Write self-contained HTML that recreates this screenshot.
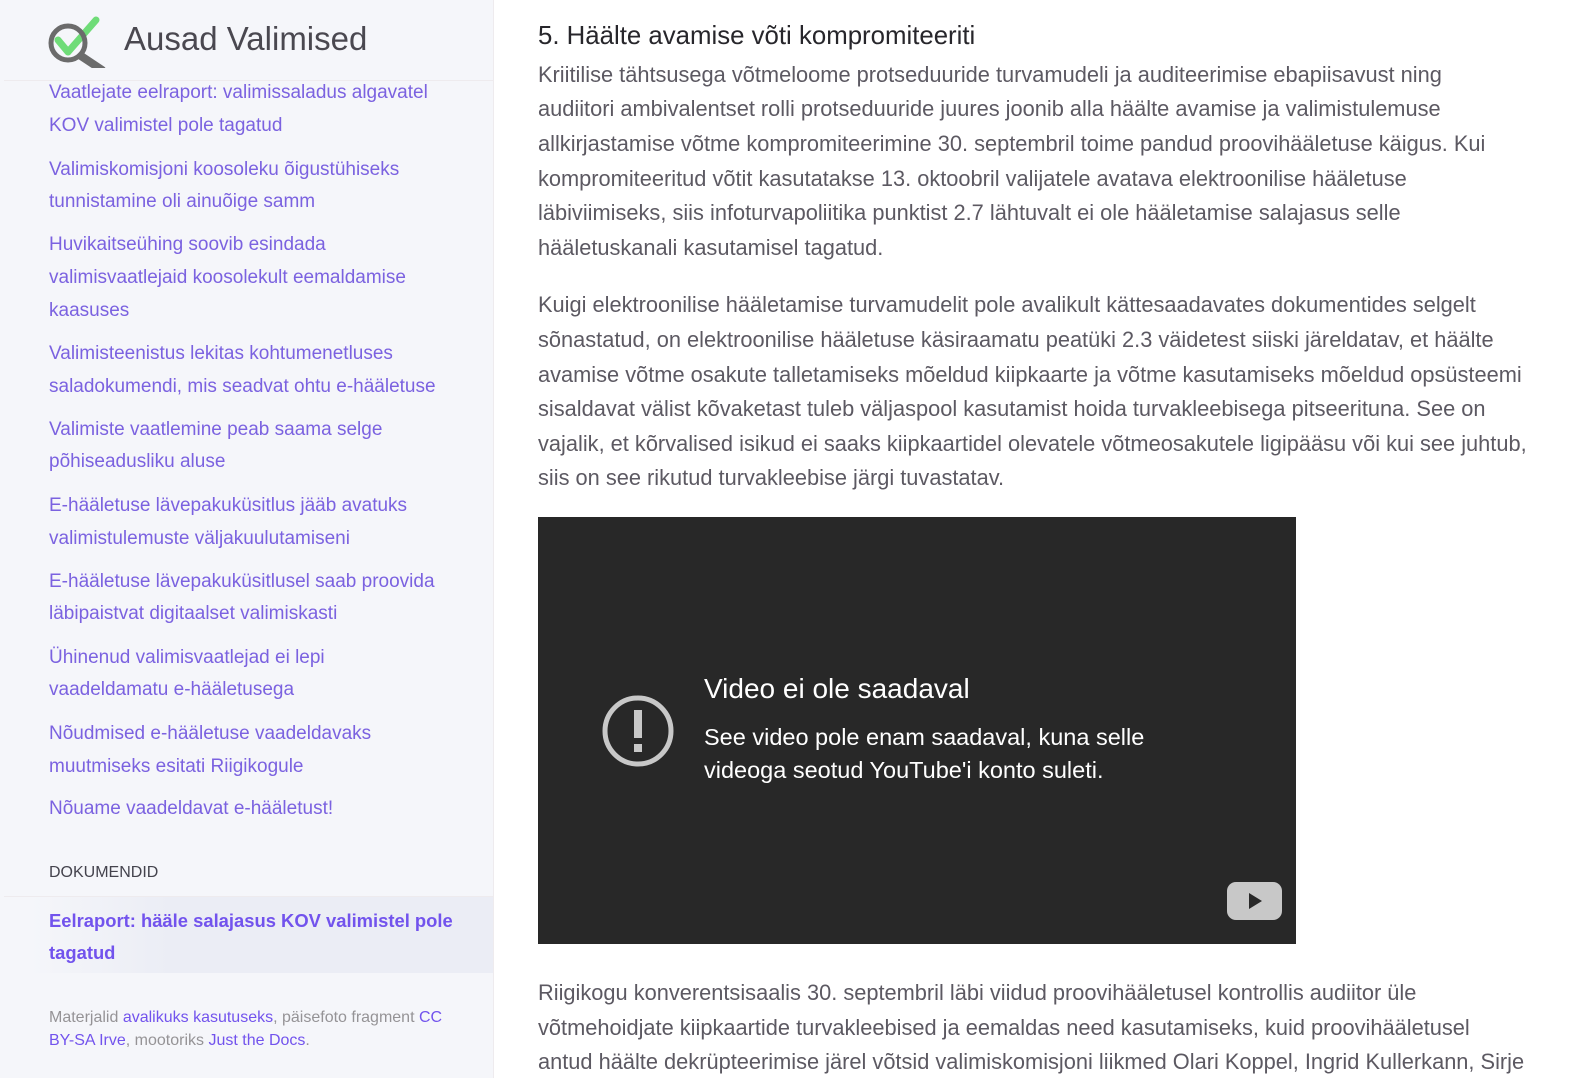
<!DOCTYPE html>
<html><head><meta charset="utf-8"><style>
body{margin:0;width:1577px;height:1078px;overflow:hidden;background:#fff;font-family:"Liberation Sans","DejaVu Sans",sans-serif;position:relative}
#side{position:absolute;left:0;top:0;width:493px;height:1078px;background:#f5f6fa;border-right:1px solid #eeebee}
.l{position:absolute;white-space:nowrap}
.s{left:49px;font-size:19px;color:#7b62e0;line-height:33px}
.m{left:538px;font-size:21.8px;color:#5c5962;line-height:35px}
</style></head><body>
<div id="side">
<svg style="position:absolute;left:46px;top:14px" width="64" height="54" viewBox="0 0 64 54">
<path d="M12 26 L22 38 L50 6" stroke="#6fdc78" stroke-width="7" fill="none" stroke-linecap="round" stroke-linejoin="round"/>
<circle cx="22" cy="29" r="17" stroke="#6b6b6b" stroke-width="5" fill="none"/>
<path d="M35 42 L56 56" stroke="#6b6b6b" stroke-width="8" stroke-linecap="round"/>
</svg>
<div class="l" style="left:124px;top:18px;font-size:33px;color:#4a4850;line-height:42px">Ausad Valimised</div>
<div style="position:absolute;left:4px;top:80px;width:489px;height:1px;background:#eeebee"></div>
<div class="l s" style="top:76px">Vaatlejate eelraport: valimissaladus algavatel</div>
<div class="l s" style="top:109px">KOV valimistel pole tagatud</div>
<div class="l s" style="top:153px">Valimiskomisjoni koosoleku õigustühiseks</div>
<div class="l s" style="top:185px">tunnistamine oli ainuõige samm</div>
<div class="l s" style="top:228px">Huvikaitseühing soovib esindada</div>
<div class="l s" style="top:261px">valimisvaatlejaid koosolekult eemaldamise</div>
<div class="l s" style="top:294px">kaasuses</div>
<div class="l s" style="top:337px">Valimisteenistus lekitas kohtumenetluses</div>
<div class="l s" style="top:370px">saladokumendi, mis seadvat ohtu e-hääletuse</div>
<div class="l s" style="top:413px">Valimiste vaatlemine peab saama selge</div>
<div class="l s" style="top:445px">põhiseadusliku aluse</div>
<div class="l s" style="top:489px">E-hääletuse lävepakuküsitlus jääb avatuks</div>
<div class="l s" style="top:522px">valimistulemuste väljakuulutamiseni</div>
<div class="l s" style="top:565px">E-hääletuse lävepakuküsitlusel saab proovida</div>
<div class="l s" style="top:597px">läbipaistvat digitaalset valimiskasti</div>
<div class="l s" style="top:641px">Ühinenud valimisvaatlejad ei lepi</div>
<div class="l s" style="top:673px">vaadeldamatu e-hääletusega</div>
<div class="l s" style="top:717px">Nõudmised e-hääletuse vaadeldavaks</div>
<div class="l s" style="top:750px">muutmiseks esitati Riigikogule</div>
<div class="l s" style="top:792px">Nõuame vaadeldavat e-hääletust!</div>
<div class="l" style="left:49px;top:864px;font-size:16px;color:#44434d">DOKUMENDID</div>
<div style="position:absolute;left:4px;top:896px;width:489px;height:1px;background:#eeebee"></div>
<div style="position:absolute;left:30px;top:897px;width:463px;height:76px;background:linear-gradient(90deg,#f5f6fa,#ebedf5 30%)"></div>
<div class="l s" style="top:904px;font-weight:bold;color:#7253ed;font-size:18.4px">Eelraport: hääle salajasus KOV valimistel pole</div>
<div class="l s" style="top:936px;font-weight:bold;color:#7253ed;font-size:18.4px">tagatud</div>
<div class="l" style="left:49px;top:1006px;font-size:16px;line-height:23px;color:#959396">Materjalid <span style="color:#7253ed">avalikuks kasutuseks</span>, päisefoto fragment <span style="color:#7253ed">CC</span><br><span style="color:#7253ed">BY-SA Irve</span>, mootoriks <span style="color:#7253ed">Just the Docs</span>.</div>
</div>
<div class="l" style="left:538px;top:21px;font-size:25.8px;color:#27262b;line-height:30px">5. Häälte avamise võti kompromiteeriti</div>
<div class="l m" style="top:57px">Kriitilise tähtsusega võtmeloome protseduuride turvamudeli ja auditeerimise ebapiisavust ning</div>
<div class="l m" style="top:91px">audiitori ambivalentset rolli protseduuride juures joonib alla häälte avamise ja valimistulemuse</div>
<div class="l m" style="top:126px">allkirjastamise võtme kompromiteerimine 30. septembril toime pandud proovihääletuse käigus. Kui</div>
<div class="l m" style="top:161px">kompromiteeritud võtit kasutatakse 13. oktoobril valijatele avatava elektroonilise hääletuse</div>
<div class="l m" style="top:195px">läbiviimiseks, siis infoturvapoliitika punktist 2.7 lähtuvalt ei ole hääletamise salajasus selle</div>
<div class="l m" style="top:230px">hääletuskanali kasutamisel tagatud.</div>
<div class="l m" style="top:287px">Kuigi elektroonilise hääletamise turvamudelit pole avalikult kättesaadavates dokumentides selgelt</div>
<div class="l m" style="top:322px">sõnastatud, on elektroonilise hääletuse käsiraamatu peatüki 2.3 väidetest siiski järeldatav, et häälte</div>
<div class="l m" style="top:357px">avamise võtme osakute talletamiseks mõeldud kiipkaarte ja võtme kasutamiseks mõeldud opsüsteemi</div>
<div class="l m" style="top:391px">sisaldavat välist kõvaketast tuleb väljaspool kasutamist hoida turvakleebisega pitseerituna. See on</div>
<div class="l m" style="top:426px">vajalik, et kõrvalised isikud ei saaks kiipkaartidel olevatele võtmeosakutele ligipääsu või kui see juhtub,</div>
<div class="l m" style="top:460px">siis on see rikutud turvakleebise järgi tuvastatav.</div>
<div style="position:absolute;left:538px;top:517px;width:758px;height:427px;background:#282828">
<svg style="position:absolute;left:63px;top:177px" width="74" height="74" viewBox="0 0 74 74"><circle cx="37" cy="37" r="33" stroke="#c8c8c8" stroke-width="5" fill="none"/><rect x="33" y="16" width="8" height="28" fill="#c8c8c8"/><rect x="33" y="50" width="8" height="8" fill="#c8c8c8"/></svg>
<div class="l" style="left:166px;top:156px;font-size:28px;color:#fff;font-weight:500">Video ei ole saadaval</div>
<div class="l" style="left:166px;top:204px;font-size:23.5px;line-height:33px;color:#fff">See video pole enam saadaval, kuna selle<br>videoga seotud YouTube'i konto suleti.</div>
<svg style="position:absolute;left:689px;top:365px" width="55" height="38" viewBox="0 0 55 38"><rect x="0" y="0" width="55" height="38" rx="9" fill="#c8c8c8"/><path d="M22 11 L35 19 L22 27Z" fill="#282828"/></svg>
</div>
<div class="l m" style="top:975px">Riigikogu konverentsisaalis 30. septembril läbi viidud proovihääletusel kontrollis audiitor üle</div>
<div class="l m" style="top:1010px">võtmehoidjate kiipkaartide turvakleebised ja eemaldas need kasutamiseks, kuid proovihääletusel</div>
<div class="l m" style="top:1044px">antud häälte dekrüpteerimise järel võtsid valimiskomisjoni liikmed Olari Koppel, Ingrid Kullerkann, Sirje</div>
</body></html>
